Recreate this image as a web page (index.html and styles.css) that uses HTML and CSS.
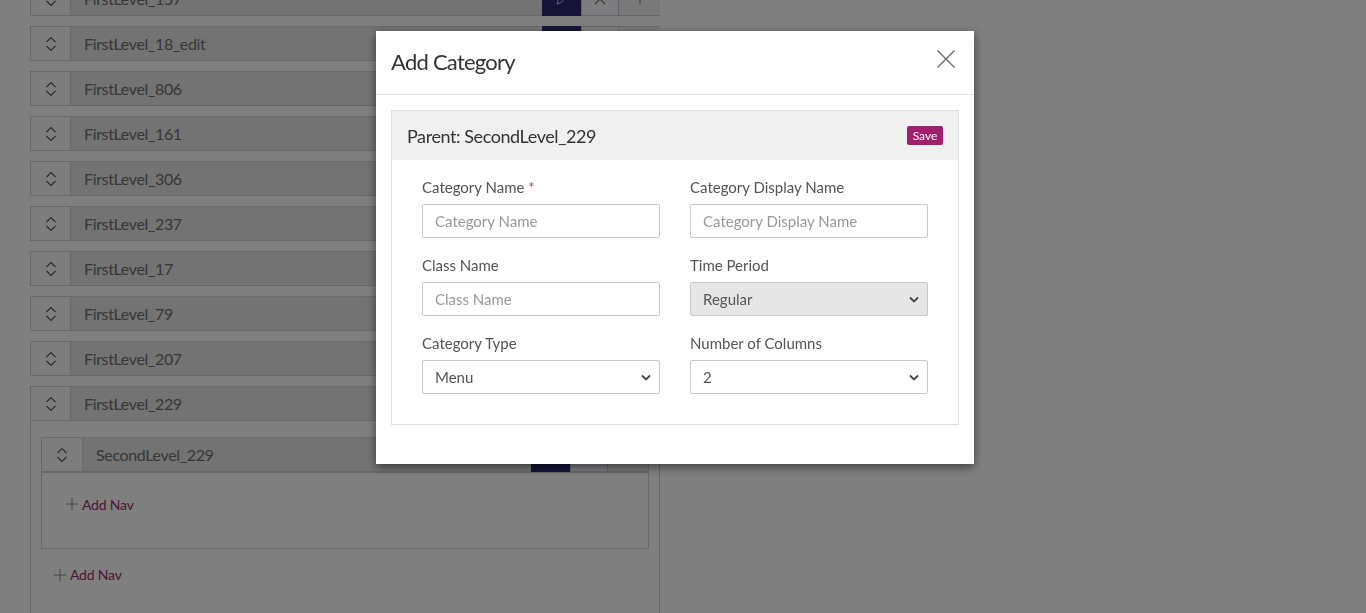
FILE: index.html
```html
<!DOCTYPE html>
<html>
<head>
<meta charset="utf-8">
<link rel="stylesheet" href="styles.css">
</head>
<body>
<div class="page">
  <div class="tree">
    <div class="row-head">
      <div class="sort"><svg width="12" height="18" viewBox="0 0 12 18"><path d="M1.5 7 6 2.5 10.5 7M1.5 11 6 15.5 10.5 11" fill="none" stroke="#555" stroke-width="1.1"/></svg></div>
      <div class="bar">FirstLevel_157</div>
      <div class="btn-edit"><svg width="14" height="14" viewBox="0 0 14 14"><path d="M2 12l1-3.5 6.5-6.5 2.5 2.5-6.5 6.5z" fill="none" stroke="#ccd" stroke-width="1"/></svg></div>
      <div class="btn-del"><svg width="12" height="12" viewBox="0 0 12 12"><path d="M1 1l10 10M11 1 1 11" stroke="#777" stroke-width="1.2"/></svg></div>
      <div class="btn-more"><svg width="10" height="10" viewBox="0 0 10 10"><path d="M5 0v10M0 5h10" stroke="#777" stroke-width="1"/></svg></div>
    </div>
    <div class="row-head">
      <div class="sort"><svg width="12" height="18" viewBox="0 0 12 18"><path d="M1.5 7 6 2.5 10.5 7M1.5 11 6 15.5 10.5 11" fill="none" stroke="#555" stroke-width="1.1"/></svg></div>
      <div class="bar">FirstLevel_18_edit</div>
      <div class="btn-edit"></div><div class="btn-del"></div><div class="btn-more"></div>
    </div>
    <div class="row-head">
      <div class="sort"><svg width="12" height="18" viewBox="0 0 12 18"><path d="M1.5 7 6 2.5 10.5 7M1.5 11 6 15.5 10.5 11" fill="none" stroke="#555" stroke-width="1.1"/></svg></div>
      <div class="bar">FirstLevel_806</div>
      <div class="btn-edit"></div><div class="btn-del"></div><div class="btn-more"></div>
    </div>
    <div class="row-head">
      <div class="sort"><svg width="12" height="18" viewBox="0 0 12 18"><path d="M1.5 7 6 2.5 10.5 7M1.5 11 6 15.5 10.5 11" fill="none" stroke="#555" stroke-width="1.1"/></svg></div>
      <div class="bar">FirstLevel_161</div>
      <div class="btn-edit"></div><div class="btn-del"></div><div class="btn-more"></div>
    </div>
    <div class="row-head">
      <div class="sort"><svg width="12" height="18" viewBox="0 0 12 18"><path d="M1.5 7 6 2.5 10.5 7M1.5 11 6 15.5 10.5 11" fill="none" stroke="#555" stroke-width="1.1"/></svg></div>
      <div class="bar">FirstLevel_306</div>
      <div class="btn-edit"></div><div class="btn-del"></div><div class="btn-more"></div>
    </div>
    <div class="row-head">
      <div class="sort"><svg width="12" height="18" viewBox="0 0 12 18"><path d="M1.5 7 6 2.5 10.5 7M1.5 11 6 15.5 10.5 11" fill="none" stroke="#555" stroke-width="1.1"/></svg></div>
      <div class="bar">FirstLevel_237</div>
      <div class="btn-edit"></div><div class="btn-del"></div><div class="btn-more"></div>
    </div>
    <div class="row-head">
      <div class="sort"><svg width="12" height="18" viewBox="0 0 12 18"><path d="M1.5 7 6 2.5 10.5 7M1.5 11 6 15.5 10.5 11" fill="none" stroke="#555" stroke-width="1.1"/></svg></div>
      <div class="bar">FirstLevel_17</div>
      <div class="btn-edit"></div><div class="btn-del"></div><div class="btn-more"></div>
    </div>
    <div class="row-head">
      <div class="sort"><svg width="12" height="18" viewBox="0 0 12 18"><path d="M1.5 7 6 2.5 10.5 7M1.5 11 6 15.5 10.5 11" fill="none" stroke="#555" stroke-width="1.1"/></svg></div>
      <div class="bar">FirstLevel_79</div>
      <div class="btn-edit"></div><div class="btn-del"></div><div class="btn-more"></div>
    </div>
    <div class="row-head">
      <div class="sort"><svg width="12" height="18" viewBox="0 0 12 18"><path d="M1.5 7 6 2.5 10.5 7M1.5 11 6 15.5 10.5 11" fill="none" stroke="#555" stroke-width="1.1"/></svg></div>
      <div class="bar">FirstLevel_207</div>
      <div class="btn-edit"></div><div class="btn-del"></div><div class="btn-more"></div>
    </div>
    <div class="expanded">
      <div class="row-head open">
        <div class="sort"><svg width="12" height="18" viewBox="0 0 12 18"><path d="M1.5 7 6 2.5 10.5 7M1.5 11 6 15.5 10.5 11" fill="none" stroke="#555" stroke-width="1.1"/></svg></div>
        <div class="bar">FirstLevel_229</div>
        <div class="btn-edit"></div><div class="btn-del"></div><div class="btn-more"></div>
      </div>
      <div class="row-body">
        <div class="sub">
          <div class="row-head open">
            <div class="sort"><svg width="12" height="18" viewBox="0 0 12 18"><path d="M1.5 7 6 2.5 10.5 7M1.5 11 6 15.5 10.5 11" fill="none" stroke="#555" stroke-width="1.1"/></svg></div>
            <div class="bar">SecondLevel_229</div>
            <div class="btn-edit"></div><div class="btn-del"></div><div class="btn-more"></div>
          </div>
          <div class="sub-body">
            <a class="add-nav"><svg width="12" height="12" viewBox="0 0 12 12"><path d="M6 0v12M0 6h12" stroke="#888" stroke-width="1"/></svg>Add Nav</a>
          </div>
        </div>
        <a class="add-nav outer"><svg width="12" height="12" viewBox="0 0 12 12"><path d="M6 0v12M0 6h12" stroke="#888" stroke-width="1"/></svg>Add Nav</a>
      </div>
    </div>
  </div>
</div>

<div class="backdrop"></div>

<div class="modal">
  <div class="modal-header">
    <h4 class="modal-title">Add Category</h4>
    <button class="close"><svg width="20" height="20" viewBox="0 0 20 20"><path d="M1.5 1.5l17 17M18.5 1.5l-17 17" stroke="#666" stroke-width="1.3"/></svg></button>
  </div>
  <div class="modal-body">
    <div class="panel">
      <div class="panel-head">
        <span class="parent">Parent: SecondLevel_229</span>
        <button class="save">Save</button>
      </div>
      <div class="panel-body">
        <div class="field">
          <label>Category Name <span class="req">*</span></label>
          <input class="control" type="text" placeholder="Category Name">
        </div>
        <div class="field">
          <label>Category Display Name</label>
          <input class="control" type="text" placeholder="Category Display Name">
        </div>
        <div class="field">
          <label>Class Name</label>
          <input class="control" type="text" placeholder="Class Name">
        </div>
        <div class="field">
          <label>Time Period</label>
          <div class="select-wrap">
            <select class="control disabled" disabled><option>Regular</option></select>
            <svg class="caret" width="10" height="7" viewBox="0 0 10 7"><path d="M1 1.5l4 4 4-4" fill="none" stroke="#444" stroke-width="1.8"/></svg>
          </div>
        </div>
        <div class="field">
          <label>Category Type</label>
          <div class="select-wrap">
            <select class="control"><option>Menu</option></select>
            <svg class="caret" width="10" height="7" viewBox="0 0 10 7"><path d="M1 1.5l4 4 4-4" fill="none" stroke="#444" stroke-width="1.8"/></svg>
          </div>
        </div>
        <div class="field">
          <label>Number of Columns</label>
          <div class="select-wrap">
            <select class="control"><option>2</option></select>
            <svg class="caret" width="10" height="7" viewBox="0 0 10 7"><path d="M1 1.5l4 4 4-4" fill="none" stroke="#444" stroke-width="1.8"/></svg>
          </div>
        </div>
      </div>
    </div>
  </div>
</div>
</body>
</html>
```
FILE: styles.css
```css
* { box-sizing: border-box; }
html, body { margin: 0; padding: 0; height: 100%; overflow: hidden; }
body {
  font-family: "Lato", "Liberation Sans", sans-serif;
  background: #fff;
  color: #333;
}
.page { padding-left: 30px; }
.tree {
  width: 630px;
  margin-top: -19px;
}
.row-head {
  display: flex;
  height: 35px;
  margin-bottom: 10px;
}
.sort {
  width: 41px;
  flex: none;
  background: #fbfbfb;
  border: 1px solid #d2d2d2;
  display: flex;
  align-items: center;
  justify-content: center;
}
.bar {
  flex: 1;
  background: #e7e7e7;
  border-top: 1px solid #d6d6d6;
  border-bottom: 1px solid #d0d0d0;
  padding-left: 13px;
  font-size: 16px;
  letter-spacing: -0.35px;
  color: #6e6e6e;
  display: flex;
  align-items: center;
}
.btn-edit {
  width: 39px; flex: none;
  background: #2a2870;
  display: flex; align-items: center; justify-content: center;
}
.btn-del {
  width: 38px; flex: none;
  background: #fafaff;
  border: 1px solid #c8c8d4;
  display: flex; align-items: center; justify-content: center;
}
.btn-more {
  width: 41px; flex: none;
  background: #f2f2f2;
  border-top: 1px solid #d6d6d6;
  border-bottom: 1px solid #d0d0d0;
  display: flex; align-items: center; justify-content: center;
}
.expanded .row-head.open { margin-bottom: 0; }
.row-body {
  border: 1px solid #d2d2d2;
  border-top: none;
  padding: 16px 10px 60px;
  height: 260px;
}
.sub { border-left: 1px solid #d2d2d2; border-right: 1px solid #d2d2d2; }
.sub .row-head { margin-bottom: 0; }
.sub .sort { border-left: none; }
.sub .btn-more { width: 40px; }
.sub-body {
  border-top: 1px solid #d2d2d2;
  border-bottom: 1px solid #d2d2d2;
  height: 77px;
  padding: 21px 0 0 24px;
}
.add-nav {
  display: inline-flex;
  align-items: center;
  gap: 4px;
  font-size: 14px;
  letter-spacing: -0.2px;
  color: #9e2a6e;
}
.add-nav.outer { margin: 17px 0 0 13px; }

.backdrop {
  position: fixed;
  inset: 0;
  background: rgba(0, 0, 0, 0.5);
}

.modal {
  position: fixed;
  left: 376px;
  top: 31px;
  width: 598px;
  background: #fff;
  box-shadow: 0 3px 9px rgba(0, 0, 0, 0.5);
}
.modal-header {
  height: 64px;
  border-bottom: 1px solid #e5e5e5;
  display: flex;
  align-items: center;
  justify-content: space-between;
  padding: 0 18px 2px 15px;
}
.modal-title {
  margin: 0;
  font-size: 22px;
  font-weight: 400;
  letter-spacing: -0.75px;
  color: #333;
}
.close {
  background: none;
  border: none;
  padding: 0;
  align-self: flex-start;
  margin-top: 18px;
  width: 20px; height: 20px;
  display: flex;
}
.modal-body { padding: 15px 15px 39px; }
.panel { border: 1px solid #dedede; }
.panel-head {
  height: 49px;
  background: #f0f0f0;
  display: flex;
  align-items: center;
  justify-content: space-between;
  padding: 0 15px;
}
.parent { font-size: 18px; letter-spacing: -0.42px; color: #333; }
.save {
  background: #a11f6d;
  color: #fff;
  border: none;
  border-radius: 2px;
  font-family: inherit;
  font-size: 12px;
  width: 36px;
  height: 19px;
  padding: 0;
}
.panel-body {
  display: grid;
  grid-template-columns: 238px 238px;
  column-gap: 30px;
  padding: 17px 30px 13px;
}
.field { margin-bottom: 17px; }
label {
  display: block;
  font-size: 15px;
  color: #555;
  line-height: 20px;
  margin-bottom: 7px;
}
.req { color: #a94442; }
.control {
  display: block;
  width: 100%;
  height: 34px;
  border: 1px solid #c8c8c8;
  border-radius: 2px;
  padding: 0 12px;
  font-family: inherit;
  font-size: 15px;
  color: #555;
  background: #fff;
  outline: none;
}
.control::placeholder { color: #999; }
select.control { appearance: none; -webkit-appearance: none; }
select.control.disabled { background: #e6e6e6; color: #555; opacity: 1; }
.select-wrap { position: relative; }
.caret { position: absolute; right: 9px; top: 14px; }
```
